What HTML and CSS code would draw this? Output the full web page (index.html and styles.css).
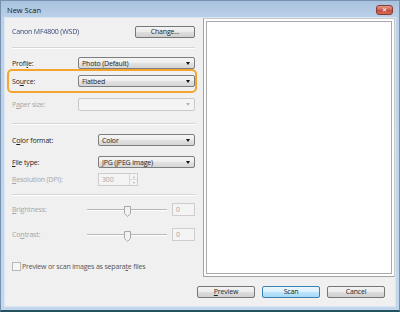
FILE: index.html
```html
<!DOCTYPE html>
<html>
<head>
  <link rel="stylesheet" href="styles.css">
</head>
<body>
  <div class="window">
    <!-- Title bar -->
    <div class="titlebar">
      <span class="title">New Scan</span>
      <span class="close">✕</span>
    </div>

    <div class="client">
      <div class="main">
        <!-- Settings column -->
        <div class="left">
          <div class="row scanner-row">
            <span class="scanner-name">Canon MF4800 (WSD)</span>
            <button class="btn change-btn">Change...</button>
          </div>
          <div class="sep sep-1"></div>

          <div class="row field profile-row">
            <label class="lbl lbl-short">Profi<u>l</u>e:</label>
            <div class="combo">Photo (Default)</div>
          </div>
          <div class="row field highlight">
            <label class="lbl lbl-short">So<u>u</u>rce:</label>
            <div class="combo">Flatbed</div>
          </div>
          <div class="row field paper-row">
            <label class="lbl lbl-short disabled">P<u>a</u>per size:</label>
            <div class="combo combo-off"></div>
          </div>
          <div class="sep sep-2"></div>

          <div class="row field color-row">
            <label class="lbl lbl-long">C<u>o</u>lor format:</label>
            <div class="combo">Color</div>
          </div>
          <div class="row field type-row">
            <label class="lbl lbl-long"><u>F</u>ile type:</label>
            <div class="combo">JPG (JPEG image)</div>
          </div>
          <div class="row field res-row">
            <label class="lbl lbl-long disabled"><u>R</u>esolution (DPI):</label>
            <div class="spin">
              <span class="spin-val">300</span>
              <span class="spin-btns">
                <span class="spin-up"></span>
                <span class="spin-down"></span>
              </span>
            </div>
          </div>
          <div class="sep sep-3"></div>

          <div class="row field slider-row bright-row">
            <label class="lbl lbl-slider disabled"><u>B</u>rightness:</label>
            <div class="track">
              <svg class="thumb" width="7" height="11" viewBox="0 0 7 11">
                <path d="M0.5 0.5 H6.5 V7.5 L3.5 10.5 L0.5 7.5 Z" fill="#f2f2f2" stroke="#a8a8a8"/>
              </svg>
            </div>
            <div class="valbox">0</div>
          </div>
          <div class="row field slider-row contrast-row">
            <label class="lbl lbl-slider disabled">Co<u>n</u>trast:</label>
            <div class="track">
              <svg class="thumb" width="7" height="11" viewBox="0 0 7 11">
                <path d="M0.5 0.5 H6.5 V7.5 L3.5 10.5 L0.5 7.5 Z" fill="#f2f2f2" stroke="#a8a8a8"/>
              </svg>
            </div>
            <div class="valbox">0</div>
          </div>

          <div class="row check-row">
            <span class="checkbox"></span>
            <span class="check-text">Preview or scan images as separa<u>t</u>e files</span>
          </div>
        </div>

        <!-- Preview area -->
        <div class="preview">
          <div class="preview-inner"></div>
        </div>
      </div>

      <div class="buttons">
        <button class="btn"><u>P</u>review</button>
        <button class="btn btn-default">Scan</button>
        <button class="btn">Cancel</button>
      </div>
    </div>
  </div>
</body>
</html>
```

FILE: styles.css
```css
* {
  box-sizing: border-box;
  margin: 0;
  padding: 0;
}

body {
  font-family: "Open Sans", "DejaVu Sans", sans-serif;
  font-size: 7px;
  letter-spacing: -0.18px;
  color: #1e1e1e;
  width: 400px;
  height: 312px;
  overflow: hidden;
}

u {
  text-decoration: underline;
  text-underline-offset: 1px;
}

/* Window frame */
.window {
  height: 312px;
  display: flex;
  flex-direction: column;
  background: linear-gradient(#a9c2dd, #bdd2ea 18px, #c2d6ec);
  border: 1px solid #7891ae;
  border-bottom: 2px solid #24525e;
  padding: 0 4px 4px;
}

.titlebar {
  height: 17px;
  display: flex;
  align-items: center;
  justify-content: space-between;
  padding-left: 2px;
  padding-right: 2px;
}

.title {
  font-size: 7.5px;
  letter-spacing: 0;
  color: #1b1b1b;
}

.close {
  width: 17px;
  height: 10px;
  border: 1px solid #8a3a32;
  border-radius: 3px;
  background: linear-gradient(#e0998e, #cd6454 50%, #c24a3a 50%, #d26d58);
  color: #fff;
  font-size: 6px;
  font-weight: bold;
  line-height: 8px;
  text-align: center;
}

.client {
  flex: 1;
  background: #f0f0f0;
  box-shadow: 0 0 0 1px #dbe6f2;
  display: flex;
  flex-direction: column;
}

.main {
  height: 259px;
  display: flex;
}

/* Settings column */
.left {
  width: 198px;
  padding: 0 8px 0 7px;
  display: flex;
  flex-direction: column;
}

.row {
  display: flex;
  align-items: center;
}

.scanner-row {
  margin-top: 7px;
  height: 13px;
  justify-content: space-between;
}

.scanner-name {
  color: #34497a;
  filter: blur(0.6px);
}

.change-btn {
  width: 60px;
  height: 13px;
}

.sep {
  height: 2px;
  border-top: 1px solid #d5d5d5;
  border-bottom: 1px solid #fff;
}

.sep-1 { margin-top: 9px; }
.sep-2 { margin-top: 13px; }
.sep-3 { margin-top: 8px; }

.field {
  height: 12px;
}

.lbl {
  flex-shrink: 0;
}

.lbl-short { width: 66px; }
.lbl-long { width: 86px; }
.lbl-slider { width: 75px; }

.disabled {
  color: #a6a6a6;
}

.profile-row { margin-top: 8px; }

.highlight {
  height: 24px;
  margin: 0 -2px 0 -5px;
  padding-left: 3px;
  border: 2px solid #f3a530;
  border-radius: 5px;
}

.paper-row { margin-top: 5px; }
.color-row { margin-top: 9px; }
.type-row { margin-top: 10px; }
.res-row { margin-top: 5px; height: 13px; }
.bright-row { margin-top: 7px; height: 13px; }
.contrast-row { margin-top: 12px; height: 13px; }

/* Drop-down list */
.combo {
  flex: 1;
  height: 12px;
  border: 1px solid #7e7e7e;
  border-radius: 2px;
  background: linear-gradient(#f6f6f6, #ededed 50%, #e2e2e2 50%, #d6d6d6);
  padding-left: 3px;
  display: flex;
  align-items: center;
  position: relative;
}

.combo::after {
  content: "";
  position: absolute;
  right: 4px;
  top: 4px;
  border-left: 2.5px solid transparent;
  border-right: 2.5px solid transparent;
  border-top: 3px solid #111;
}

.combo-off {
  height: 13px;
  border-color: #c9c9c9;
  background: #f4f4f4;
}

.combo-off::after {
  border-top-color: #b5b5b5;
}

/* Spin box */
.spin {
  width: 40px;
  height: 13px;
  border: 1px solid #cdcdcd;
  background: #f4f4f4;
  display: flex;
}

.spin-val {
  flex: 1;
  padding-left: 3px;
  color: #a6a6a6;
  line-height: 11px;
}

.spin-btns {
  width: 8px;
  border-left: 1px solid #d6d6d6;
  display: flex;
  flex-direction: column;
}

.spin-up,
.spin-down {
  flex: 1;
  display: flex;
  align-items: center;
  justify-content: center;
}

.spin-up { border-bottom: 1px solid #dadada; }

.spin-up::after {
  content: "";
  border-left: 1.5px solid transparent;
  border-right: 1.5px solid transparent;
  border-bottom: 2px solid #b5b5b5;
}

.spin-down::after {
  content: "";
  border-left: 1.5px solid transparent;
  border-right: 1.5px solid transparent;
  border-top: 2px solid #b5b5b5;
}

/* Sliders */
.track {
  width: 80px;
  height: 2px;
  border-top: 1px solid #b8b8b8;
  border-bottom: 1px solid #fff;
  display: flex;
  justify-content: center;
  align-items: center;
}

.thumb {
  flex-shrink: 0;
  margin-top: 3px;
}

.valbox {
  width: 23px;
  height: 13px;
  margin-left: 5px;
  border: 1px solid #cdcdcd;
  background: #f4f4f4;
  color: #a6a6a6;
  padding-left: 3px;
  line-height: 11px;
}

/* Check box */
.check-row {
  margin-top: 21px;
  height: 9px;
}

.checkbox {
  width: 9px;
  height: 9px;
  border: 1px solid #b9b9b9;
  background: #f6f6f6;
  margin-right: 1px;
}

.check-text {
  color: #555;
}

/* Preview area */
.preview {
  flex: 1;
  background: #fff;
  border: 1px solid #c9c9c9;
  border-left-color: #a3a3a3;
  border-bottom-color: #a3a3a3;
  padding: 2px;
}

.preview-inner {
  height: 100%;
  border: 1px solid #a9a9a9;
}

/* Buttons */
.btn {
  font-family: inherit;
  font-size: 7px;
  letter-spacing: inherit;
  color: #1e1e1e;
  height: 12px;
  border: 1px solid #767676;
  border-radius: 2px;
  background: linear-gradient(#f3f3f3, #ebebeb 50%, #dedede 50%, #d0d0d0);
  line-height: 10px;
}

.buttons {
  margin-top: 9px;
  padding-right: 10px;
  display: flex;
  justify-content: flex-end;
  gap: 7px;
}

.buttons .btn {
  width: 58px;
}

.btn-default {
  border-color: #3c7fb1;
  background: linear-gradient(#eaf6fd, #d9f0fc 50%, #bee6fd 50%, #a7d9f5);
}
```
